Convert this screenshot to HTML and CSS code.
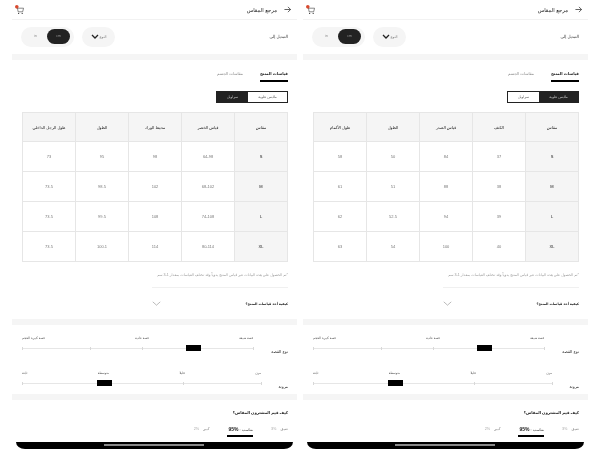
FILE: index.html
```html
<!DOCTYPE html>
<html lang="ar" dir="rtl">
<head>
  <meta charset="UTF-8">
  <title>مرجع المقاس</title>
  <link rel="stylesheet" href="styles.css">
</head>
<body>
  <div class="screen">
    <header class="top">
      <svg class="back" viewBox="0 0 8 8"><path d="M.5 4h7M4.5 1l3 3-3 3" fill="none" stroke="#222" stroke-width=".8"/></svg>
      <h1>مرجع المقاس</h1>
      <svg class="cart" viewBox="0 0 10 11"><path d="M2.5 3.5h7l-1 4h-5l-1-5.5" fill="none" stroke="#444" stroke-width=".7"/><circle cx="4" cy="9.3" r=".7" fill="#444"/><circle cx="8" cy="9.3" r=".7" fill="#444"/><circle cx="2" cy="2" r="2" fill="#d9492e"/></svg>
    </header>
    <div class="switch-row">
      <span class="switch-label">التبديل إلى</span>
      <div class="drop"><span>النوع</span><svg class="chev" viewBox="0 0 8 5"><path d="M1 1l3 3 3-3" fill="none" stroke="#222" stroke-width="1.3"/></svg></div>
      <div class="units"><span class="unit on">cm</span><span class="unit">in</span></div>
    </div>
    <div class="band band-1"></div>
    <div class="tabs"><span class="tab on">قياسات المنتج</span><span class="tab">مقاسات الجسم</span></div>
    <div class="seg"><span class="seg-item wide on">ملابس علوية</span><span class="seg-item">سراويل</span></div>
    <table class="sizes">
      <tr><th>مقاس</th><th>قياس الخصر</th><th>محيط الورك</th><th>الطول</th><th>طول الرجل الداخلي</th></tr>
      <tr><th>S</th><td>64-98</td><td>98</td><td>95</td><td>73</td></tr>
      <tr><th>M</th><td>68-102</td><td>102</td><td>98.5</td><td>73.5</td></tr>
      <tr><th>L</th><td>74-108</td><td>108</td><td>99.5</td><td>73.5</td></tr>
      <tr><th>XL</th><td>80-114</td><td>114</td><td>100.1</td><td>73.5</td></tr>
    </table>
    <p class="note">*تم الحصول على هذه البيانات عبر قياس المنتج يدوياً وقد تختلف القياسات بمقدار 1-3 سم</p>
    <div class="how"><span>كيفية أخذ قياسات المنتج؟</span><svg class="how-chev" viewBox="0 0 10 6"><path d="M.5 1l4.5 4 4.5-4" fill="none" stroke="#777" stroke-width=".6"/></svg></div>
    <div class="band"></div>
    <section class="fit">
      <div class="fit-row">
        <span class="fit-name">نوع القصة</span>
        <div class="scale scale-cut">
          <div class="marks"><span>قصة ضيقة</span><span>قصة عادية</span><span>قصة كبيرة الحجم</span></div>
          <div class="track">
            <i class="tick" style="left:0"></i><i class="tick" style="left:68px"></i><i class="tick" style="left:120px"></i><i class="tick" style="left:231px"></i>
            <b class="knob" style="left:164px"></b>
          </div>
        </div>
      </div>
      <div class="fit-row">
        <span class="fit-name">مرونة</span>
        <div class="scale scale-flex">
          <div class="marks"><span>مرن</span><span>قليلا</span><span>متوسطة</span><span>ثابتة</span></div>
          <div class="track">
            <i class="tick" style="left:0"></i><i class="tick" style="left:161px"></i><i class="tick" style="left:239px"></i>
            <b class="knob" style="left:75px"></b>
          </div>
        </div>
      </div>
    </section>
    <div class="band"></div>
    <h2 class="ask">كيف قيم المشترون المقاس؟</h2>
    <div class="rates"><span class="rate">ضيق <em>3%</em></span><span class="rate on">مناسب : <strong>95%</strong></span><span class="rate">كبير <em>2%</em></span></div>
    <div class="homebar"><i></i></div>
  </div>

  <div class="screen">
    <header class="top">
      <svg class="back" viewBox="0 0 8 8"><path d="M.5 4h7M4.5 1l3 3-3 3" fill="none" stroke="#222" stroke-width=".8"/></svg>
      <h1>مرجع المقاس</h1>
      <svg class="cart" viewBox="0 0 10 11"><path d="M2.5 3.5h7l-1 4h-5l-1-5.5" fill="none" stroke="#444" stroke-width=".7"/><circle cx="4" cy="9.3" r=".7" fill="#444"/><circle cx="8" cy="9.3" r=".7" fill="#444"/><circle cx="2" cy="2" r="2" fill="#d9492e"/></svg>
    </header>
    <div class="switch-row">
      <span class="switch-label">التبديل إلى</span>
      <div class="drop"><span>النوع</span><svg class="chev" viewBox="0 0 8 5"><path d="M1 1l3 3 3-3" fill="none" stroke="#222" stroke-width="1.3"/></svg></div>
      <div class="units"><span class="unit on">cm</span><span class="unit">in</span></div>
    </div>
    <div class="band band-1"></div>
    <div class="tabs"><span class="tab on">قياسات المنتج</span><span class="tab">مقاسات الجسم</span></div>
    <div class="seg"><span class="seg-item wide">ملابس علوية</span><span class="seg-item on">سراويل</span></div>
    <table class="sizes">
      <tr><th>مقاس</th><th>الكتف</th><th>قياس الصدر</th><th>الطول</th><th>طول الأكمام</th></tr>
      <tr><th>S</th><td>37</td><td>84</td><td>50</td><td>58</td></tr>
      <tr><th>M</th><td>38</td><td>88</td><td>51</td><td>61</td></tr>
      <tr><th>L</th><td>39</td><td>94</td><td>52.5</td><td>62</td></tr>
      <tr><th>XL</th><td>40</td><td>100</td><td>54</td><td>63</td></tr>
    </table>
    <p class="note">*تم الحصول على هذه البيانات عبر قياس المنتج يدوياً وقد تختلف القياسات بمقدار 1-3 سم</p>
    <div class="how"><span>كيفية أخذ قياسات المنتج؟</span><svg class="how-chev" viewBox="0 0 10 6"><path d="M.5 1l4.5 4 4.5-4" fill="none" stroke="#777" stroke-width=".6"/></svg></div>
    <div class="band"></div>
    <section class="fit">
      <div class="fit-row">
        <span class="fit-name">نوع القصة</span>
        <div class="scale scale-cut">
          <div class="marks"><span>قصة ضيقة</span><span>قصة عادية</span><span>قصة كبيرة الحجم</span></div>
          <div class="track">
            <i class="tick" style="left:0"></i><i class="tick" style="left:68px"></i><i class="tick" style="left:120px"></i><i class="tick" style="left:231px"></i>
            <b class="knob" style="left:164px"></b>
          </div>
        </div>
      </div>
      <div class="fit-row">
        <span class="fit-name">مرونة</span>
        <div class="scale scale-flex">
          <div class="marks"><span>مرن</span><span>قليلا</span><span>متوسطة</span><span>ثابتة</span></div>
          <div class="track">
            <i class="tick" style="left:0"></i><i class="tick" style="left:161px"></i><i class="tick" style="left:239px"></i>
            <b class="knob" style="left:75px"></b>
          </div>
        </div>
      </div>
    </section>
    <div class="band"></div>
    <h2 class="ask">كيف قيم المشترون المقاس؟</h2>
    <div class="rates"><span class="rate">ضيق <em>3%</em></span><span class="rate on">مناسب : <strong>95%</strong></span><span class="rate">كبير <em>2%</em></span></div>
    <div class="homebar"><i></i></div>
  </div>
</body>
</html>
```

FILE: styles.css
```css
html, body {
  margin: 0;
  height: 449px;
  overflow: hidden;
  background: #fff;
}
body {
  direction: ltr;
  display: flex;
  flex-direction: row;
  gap: 6px;
  padding-left: 12px;
  font-family: "Liberation Sans", "DejaVu Sans", sans-serif;
  color: #222;
}
.screen {
  direction: rtl;
  position: relative;
  width: 285px;
  height: 449px;
  overflow: hidden;
  flex: none;
  display: flex;
  flex-direction: column;
  filter: blur(.35px);
}
.top {
  height: 19px;
  border-bottom: 1px solid #f2f2f2;
  display: flex;
  align-items: center;
  padding: 0 6px 0 3px;
}
.top h1 {
  margin: 0 7px 0 0;
  font-size: 5.3px;
  font-weight: 400;
  line-height: 8px;
}
.back { width: 7px; height: 7px; }
.cart { width: 9px; height: 10px; margin-right: auto; }
.switch-row {
  display: flex;
  align-items: center;
  height: 21px;
  margin-top: 6px;
  padding: 0 9px;
}
.switch-label { font-size: 4.2px; margin-left: auto; color: #333; }
.drop {
  width: 33px;
  height: 20px;
  border-radius: 10px;
  background: #f5f5f5;
  display: flex;
  align-items: center;
  justify-content: center;
  gap: 1px;
  font-size: 3.5px;
  color: #777;
  margin-left: 8px;
}
.chev { width: 8px; height: 5px; }
.units {
  width: 53px;
  height: 20px;
  border-radius: 10px;
  background: #f5f5f5;
  display: flex;
  align-items: center;
  padding: 0 4px 0 3px;
  box-sizing: border-box;
  font-size: 3.5px;
}
.unit { flex: 1; text-align: center; color: #888; line-height: 15px; }
.unit.on { flex: none; width: 23px; border-radius: 8px; background: #222; color: #999; }
.band { height: 6px; background: #f5f5f5; flex: none; }
.band-1 { margin-top: 7px; }
.tabs {
  display: flex;
  gap: 17px;
  margin: 10px 9px 0;
}
.tab {
  font-size: 4px;
  line-height: 8px;
  height: 10px;
  color: #888;
}
.tab.on {
  color: #222;
  font-weight: 700;
  border-bottom: 2px solid #000;
}
.seg {
  display: flex;
  width: 72px;
  height: 12px;
  box-sizing: border-box;
  margin: 9px 9px 0 0;
  border: 1px solid #222;
  background: #222;
  font-size: 3.5px;
}
.seg-item {
  width: 31px;
  line-height: 10px;
  text-align: center;
  color: #ccc;
}
.seg-item.wide { width: 39px; }
.seg-item.on { background: #fff; color: #555; }
.sizes {
  width: 266px;
  height: 150px;
  margin: 9px 9px 0 10px;
  border-collapse: collapse;
  table-layout: fixed;
  font-size: 4px;
}
.sizes tr { height: 30px; }
.sizes tr:first-child { height: 29px; }
.sizes th, .sizes td {
  border: 1px solid #e6e6e6;
  padding: 0;
  text-align: center;
}
.sizes th { background: #f5f5f5; color: #111; font-weight: 400; }
.sizes td { direction: ltr; color: #777; }
.note {
  width: 136px;
  margin: 10px 9px 0 0;
  padding-bottom: 9px;
  border-bottom: 1px solid #f0f0f0;
  font-size: 3.6px;
  line-height: 6px;
  white-space: nowrap;
  color: #999;
}
.how {
  width: 136px;
  height: 31px;
  margin-right: 9px;
  display: flex;
  align-items: center;
  justify-content: space-between;
  font-size: 3.4px;
  font-weight: 700;
}
.how-chev { width: 9px; height: 5px; }
.fit { height: 69px; padding: 9px 9px 0 10px; box-sizing: border-box; }
.fit-row {
  display: flex;
  justify-content: space-between;
  height: 35px;
}
.fit-name { font-size: 4px; line-height: 6px; margin-top: 15px; color: #222; }
.scale { flex: none; }
.scale-cut { width: 231px; }
.scale-flex { width: 239px; }
.marks {
  display: flex;
  justify-content: space-between;
  font-size: 3.2px;
  line-height: 8px;
  color: #555;
}
.track {
  direction: ltr;
  position: relative;
  height: 1px;
  margin-top: 6px;
  background: #e6e6e6;
}
.tick {
  position: absolute;
  top: -1px;
  width: 1px;
  height: 3px;
  background: #d8d8d8;
}
.knob {
  position: absolute;
  top: -3px;
  width: 15px;
  height: 6px;
  background: #000;
}
.ask {
  margin: 10px 9px 0 0;
  font-size: 3.9px;
  line-height: 6px;
  font-weight: 700;
}
.rates {
  display: flex;
  gap: 18px;
  margin: 10px 9px 0 0;
  font-size: 3.8px;
  line-height: 6px;
  color: #888;
}
.rate em, .rate strong { direction: ltr; unicode-bidi: isolate; }
.rate em { font-style: normal; margin-right: 3px; color: #aaa; }
.rate.on {
  height: 9px;
  padding-left: 1px;
  color: #333;
  border-bottom: 2px solid #000;
}
.rate.on strong { font-size: 5px; font-weight: 700; color: #222; }
.homebar {
  position: absolute;
  left: 4px;
  right: 4px;
  bottom: 0;
  height: 7px;
  background: #000;
  border-radius: 0 0 9px 9px / 0 0 7px 7px;
}
.homebar i {
  position: absolute;
  left: 88px;
  top: 2px;
  width: 100px;
  height: 2px;
  background: #888;
}
```
